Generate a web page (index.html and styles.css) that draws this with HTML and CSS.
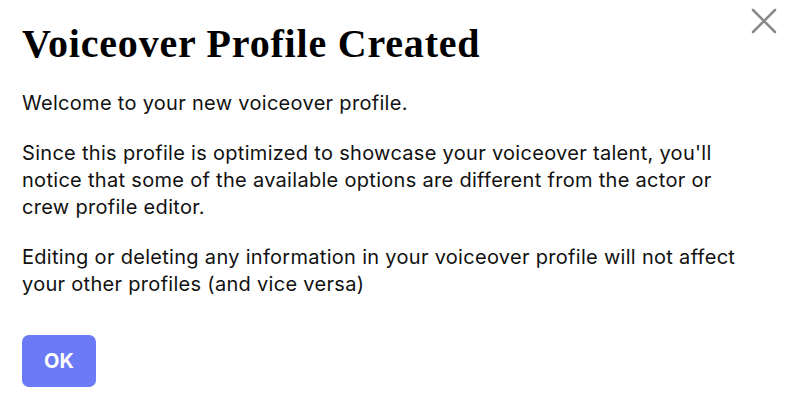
FILE: index.html
```html
<!DOCTYPE html>
<html lang="en">
<head>
    <meta charset="UTF-8">
    <meta name="viewport" content="width=device-width, initial-scale=1.0">
    <title>Voiceover Profile Created</title>
    <link rel="stylesheet" href="styles.css">
</head>
<body>
    <div class="modal">
        <button class="close" type="button" aria-label="Close">
            <svg width="26" height="26" viewBox="0 0 26 26"><path d="M2 2 L24 24 M24 2 L2 24" stroke="#8a8a8a" stroke-width="2.6" stroke-linecap="round" fill="none"/></svg>
        </button>
        <h1>Voiceover Profile Created</h1>
        <p>Welcome to your new voiceover profile.</p>
        <p>Since this profile is optimized to showcase your voiceover talent, you'll notice that some of the available options are different from the actor or crew profile editor.</p>
        <p>Editing or deleting any information in your voiceover profile will not affect your other profiles (and vice versa)</p>
        <button class="ok" type="button">OK</button>
    </div>
</body>
</html>
```

FILE: styles.css
```css
body { margin: 0; background: #fff; color: #111; font-family: 'Inter', 'Noto Sans', sans-serif; }
.modal { position: relative; width: 791px; height: 411px; box-sizing: border-box; padding: 20px 39px 0 22px; }
h1 { font-family: 'Liberation Serif', 'DejaVu Serif', serif; font-weight: 700; font-size: 40px; line-height: 48px; letter-spacing: 0.8px; margin: 0 0 22px; color: #000; }
p { font-size: 20px; line-height: 27px; letter-spacing: 0.3px; margin: 0 0 23px; }
.close { position: absolute; top: 8px; right: 14px; background: none; border: none; padding: 0; cursor: pointer; }
.ok { margin-top: 14px; width: 74px; height: 52px; background: #6b7af5; color: #fff; border: none; border-radius: 7px; font-family: 'Inter', sans-serif; font-weight: 700; font-size: 20px; cursor: pointer; }
```
